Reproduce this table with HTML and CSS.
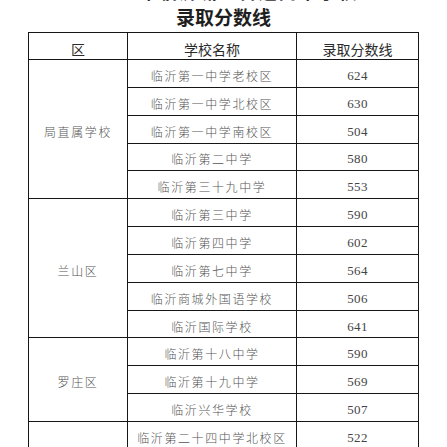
FILE: index.html
```html
<!DOCTYPE html>
<html lang="zh-CN">
<head>
<meta charset="utf-8">
<link rel="stylesheet" href="styles.css">
</head>
<body>
<div class="page">
  <div class="title-prev">2019年临沂城区普通高中学校</div>
  <div class="title">录取分数线</div>
  <table class="scores">
    <colgroup>
      <col class="c-area">
      <col class="c-school">
      <col class="c-score">
    </colgroup>
    <thead>
      <tr class="head">
        <th>区</th>
        <th>学校名称</th>
        <th>录取分数线</th>
      </tr>
    </thead>
    <tbody>
      <tr><td class="area" rowspan="5">局直属学校</td><td class="school">临沂第一中学老校区</td><td class="num">624</td></tr>
      <tr><td class="school">临沂第一中学北校区</td><td class="num">630</td></tr>
      <tr><td class="school">临沂第一中学南校区</td><td class="num">504</td></tr>
      <tr><td class="school">临沂第二中学</td><td class="num">580</td></tr>
      <tr><td class="school">临沂第三十九中学</td><td class="num">553</td></tr>
      <tr><td class="area" rowspan="5">兰山区</td><td class="school">临沂第三中学</td><td class="num">590</td></tr>
      <tr><td class="school">临沂第四中学</td><td class="num">602</td></tr>
      <tr><td class="school">临沂第七中学</td><td class="num">564</td></tr>
      <tr><td class="school">临沂商城外国语学校</td><td class="num">506</td></tr>
      <tr><td class="school">临沂国际学校</td><td class="num">641</td></tr>
      <tr><td class="area" rowspan="3">罗庄区</td><td class="school">临沂第十八中学</td><td class="num">590</td></tr>
      <tr><td class="school">临沂第十九中学</td><td class="num">569</td></tr>
      <tr><td class="school">临沂兴华学校</td><td class="num">507</td></tr>
      <tr><td class="area" rowspan="2"></td><td class="school">临沂第二十四中学北校区</td><td class="num">522</td></tr>
      <tr><td class="school">&nbsp;</td><td class="num">&nbsp;</td></tr>
    </tbody>
  </table>
</div>
</body>
</html>
```
FILE: styles.css
```css
html, body {
  margin: 0;
  padding: 0;
  background: #ffffff;
}
body {
  overflow: hidden;
  font-family: "Noto Sans CJK SC", "Noto Sans", sans-serif;
}
.page {
  width: 447px;
}
.title-prev {
  margin-top: -19px;
  height: 21px;
  line-height: 21px;
  overflow: hidden;
  text-align: center;
  font-size: 18px;
  font-weight: bold;
  color: #333;
  letter-spacing: 2px;
}
.title {
  height: 29px;
  line-height: 29px;
  text-align: center;
  font-size: 19px;
  font-weight: bold;
  color: #1e1e1e;
  margin-bottom: 1px;
}
.scores {
  margin-left: 28px;
  width: 390px;
  table-layout: fixed;
  border-collapse: collapse;
}
.c-area { width: 99px; }
.c-school { width: 169px; }
.c-score { width: 122px; }
.scores th,
.scores td {
  border: 1px solid #161616;
  padding: 5px 0 0 0;
  text-align: center;
  vertical-align: middle;
  line-height: 20px;
}
.head th {
  height: 21px;
  font-weight: normal;
  font-size: 14px;
  color: #2a2a2a;
}
.scores tbody tr {
  height: 27.85px;
}
.school,
.area {
  font-size: 12px;
  font-weight: 300;
  letter-spacing: 1.6px;
  color: #555;
  white-space: nowrap;
}
.num {
  font-family: "Liberation Serif", serif;
  font-size: 13px;
  letter-spacing: 0.4px;
  color: #444;
}
```
